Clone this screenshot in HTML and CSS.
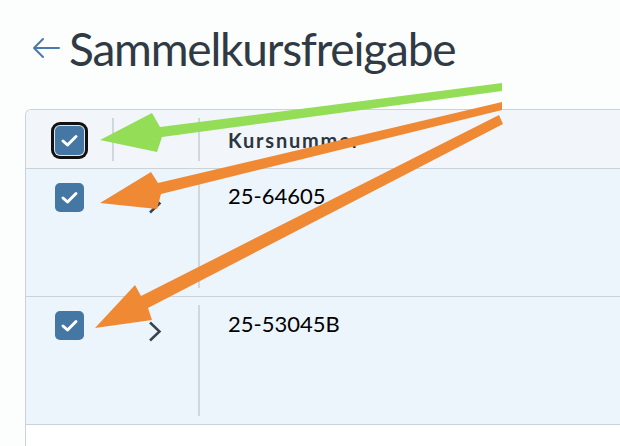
FILE: index.html
```html
<!DOCTYPE html>
<html lang="de">
<head>
    <meta charset="UTF-8">
    <meta name="viewport" content="width=device-width, initial-scale=1.0">
    <title>Sammelkursfreigabe</title>
    <link rel="stylesheet" href="styles.css">
</head>
<body>
    <header class="page-head">
        <a class="back-link" href="#" aria-label="Zurück">
            <svg width="28" height="22" viewBox="0 0 28 22">
                <path d="M27 11H2M11 2L2 11l9 9" fill="none" stroke="#4a7aa9" stroke-width="2" stroke-linecap="round" stroke-linejoin="round"/>
            </svg>
        </a>
        <h1>Sammelkursfreigabe</h1>
    </header>

    <div class="course-table">
        <div class="row row-head">
            <div class="cell cell-check">
                <span class="checkbox is-focused">
                    <svg width="29" height="29" viewBox="0 0 29 29"><path d="M8 15l4.5 4L21 10.5" fill="none" stroke="#fff" stroke-width="3" stroke-linecap="round" stroke-linejoin="round"/></svg>
                </span>
            </div>
            <div class="cell cell-toggle"></div>
            <div class="cell cell-main">Kursnummer</div>
        </div>

        <div class="row">
            <div class="cell cell-check">
                <span class="checkbox">
                    <svg width="29" height="29" viewBox="0 0 29 29"><path d="M8 15l4.5 4L21 10.5" fill="none" stroke="#fff" stroke-width="3" stroke-linecap="round" stroke-linejoin="round"/></svg>
                </span>
            </div>
            <div class="cell cell-toggle">
                <svg width="14" height="21" viewBox="0 0 14 21"><path d="M2 1.5l9.5 9-9.5 9" fill="none" stroke="#3a434b" stroke-width="2.5"/></svg>
            </div>
            <div class="cell cell-main">25-64605</div>
        </div>

        <div class="row">
            <div class="cell cell-check">
                <span class="checkbox">
                    <svg width="29" height="29" viewBox="0 0 29 29"><path d="M8 15l4.5 4L21 10.5" fill="none" stroke="#fff" stroke-width="3" stroke-linecap="round" stroke-linejoin="round"/></svg>
                </span>
            </div>
            <div class="cell cell-toggle">
                <svg width="14" height="21" viewBox="0 0 14 21"><path d="M2 1.5l9.5 9-9.5 9" fill="none" stroke="#3a434b" stroke-width="2.5"/></svg>
            </div>
            <div class="cell cell-main">25-53045B</div>
        </div>
    </div>

    <!-- annotation arrows drawn over the screenshot -->
    <svg class="annotations" width="620" height="446" viewBox="0 0 620 446">
        <polygon fill="#93dd57" points="502,83 160,127 152,113 100,140 157,152 162,137 502,91"/>
        <polygon fill="#ef8934" points="502,102 158,183 151,172 100,203 157,209 161,194 502,110"/>
        <polygon fill="#ef8934" points="499,115 141,296 135,285 95,328 152,320 148,308 503,124"/>
    </svg>
</body>
</html>
```

FILE: styles.css
```css
/* General Styles */
body {
    margin: 0;
    font-family: 'Lato', 'Roboto', sans-serif;
    background: #fcfdfd;
    color: #1b1f23;
    min-height: 446px;
    position: relative;
    overflow: hidden;
}

/* Page Header */
.page-head {
    display: flex;
    align-items: flex-start;
    padding: 21px 0 0 32px;
    height: 109px;
    box-sizing: border-box;
}

.back-link {
    display: flex;
    margin-right: 9px;
    margin-top: 16px;
}

h1 {
    margin: 0;
    font-size: 46px;
    font-weight: 400;
    line-height: 1.2;
    letter-spacing: -1.2px;
    color: #2f3a44;
}

/* Table */
.course-table {
    margin-left: 25px;
    border-top: 1px solid #cbd3da;
    border-left: 1px solid #cbd3da;
    border-top-left-radius: 6px;
    background: #ffffff;
    min-height: 340px;
}

.row {
    display: grid;
    grid-template-columns: 86px 86px 1fr;
    height: 127px;
    background: #ecf5fc;
    border-bottom: 1px solid #cbd3da;
}

.row-head {
    height: 58px;
    background: #f2f5f9;
    border-top-left-radius: 6px;
}

.cell-check {
    display: flex;
    justify-content: center;
    padding-top: 14px;
}

.row-head .cell-check {
    align-items: center;
    padding-top: 2px;
}

.cell-toggle {
    display: flex;
    justify-content: center;
    padding-top: 24px;
}

.row-head .cell-toggle {
    border-left: 2px solid #d0d7dd;
    margin: 8px 0 7px;
    padding: 0;
}

.cell-main {
    border-left: 2px solid #d0d7dd;
    margin: 8px 0;
    padding: 5px 0 0 28px;
    font-size: 22px;
    color: #000;
}

.row-head .cell-main {
    margin: 8px 0 7px;
    padding: 0 0 0 28px;
    display: flex;
    align-items: center;
    font-size: 20px;
    font-weight: 700;
    letter-spacing: 1.8px;
    color: #2b3640;
}

/* Checkbox */
.checkbox {
    display: block;
    width: 29px;
    height: 29px;
    border-radius: 5px;
    background: #4577a5;
}

.checkbox svg {
    display: block;
}

.checkbox.is-focused {
    box-shadow: 0 0 0 1px #dfe6ec, 0 0 0 4px #111;
}

/* Annotation overlay */
.annotations {
    position: absolute;
    top: 0;
    left: 0;
    pointer-events: none;
}
```
